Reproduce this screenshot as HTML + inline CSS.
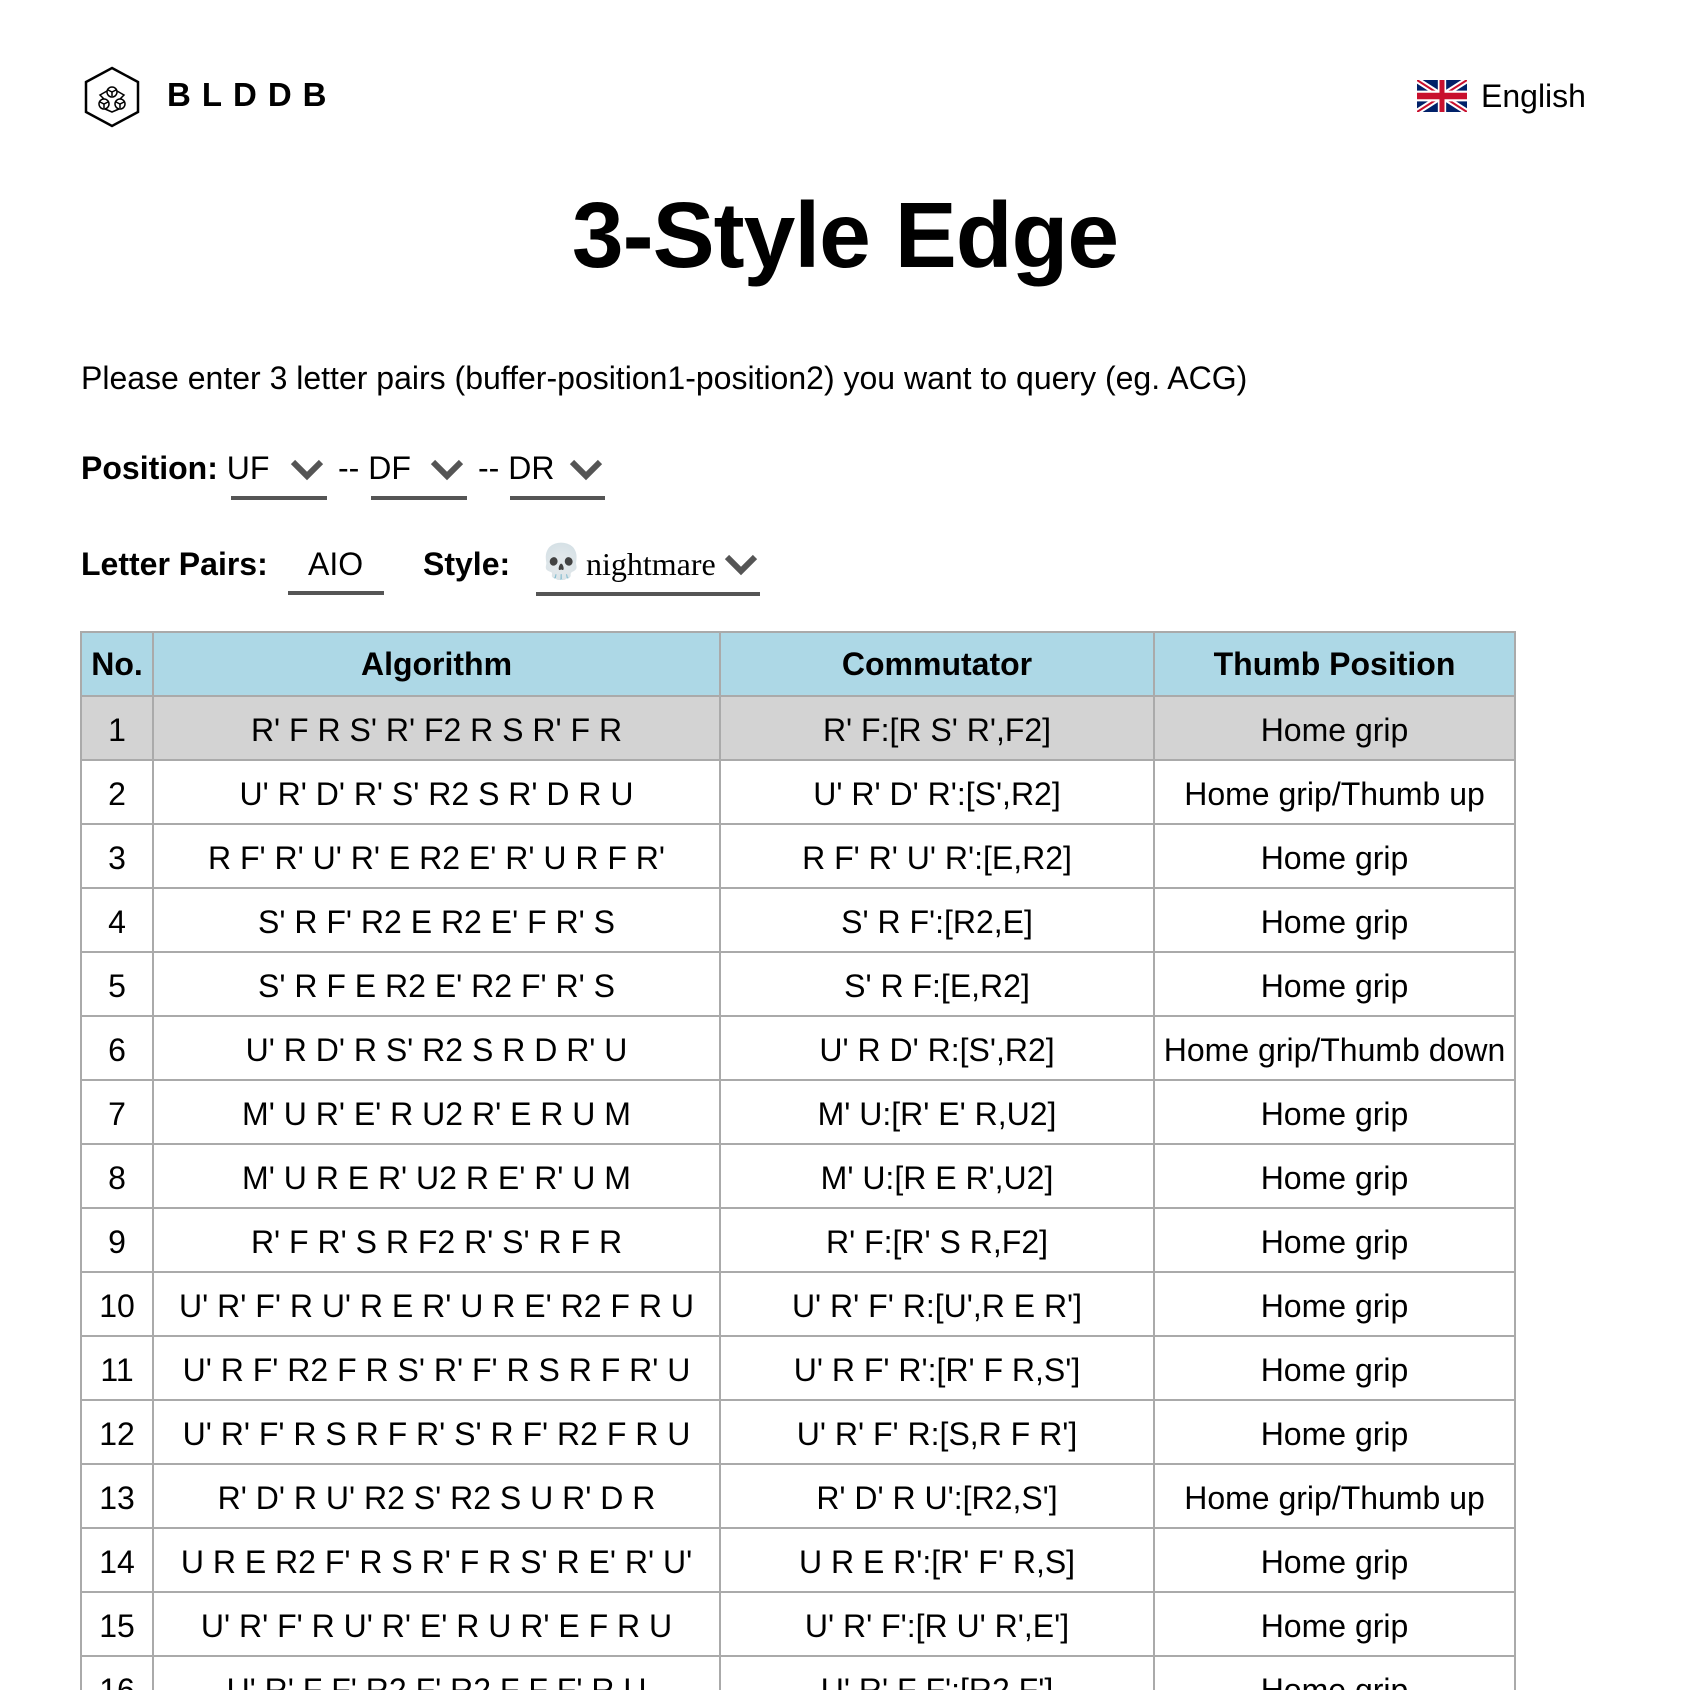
<!DOCTYPE html>
<html><head><meta charset="utf-8"><style>
html,body{margin:0;padding:0;width:1690px;height:1690px;overflow:hidden}
body{background:#fff;font-family:"Liberation Sans","DejaVu Sans",sans-serif;color:#000}
#w{position:relative;width:1690px;height:1690px;overflow:hidden}
.a{position:absolute;white-space:nowrap}
.logo{left:167px;top:76px;font-size:33px;font-weight:bold;letter-spacing:11px}
h1{position:absolute;left:0;width:1690px;text-align:center;top:182px;margin:0;font-size:93px;font-weight:bold;letter-spacing:-1px}
.f30{font-size:32px}
.b{font-weight:bold}
.ul{position:absolute;height:4px;background:#555}
.chev{position:absolute}
table{position:absolute;left:80px;top:631px;border-collapse:collapse;font-size:32px}
td,th{border:2px solid #aaa;height:62px;text-align:center;padding:0;white-space:nowrap}
td{padding-top:4px;height:58px}
th{background:#add8e6;font-weight:bold}
tr.sel td{background:#d3d3d3}
</style></head><body><div id="w">
<svg class="a" style="left:82px;top:65px" width="60" height="64" viewBox="0 0 60 64">
<polygon points="30,3 56,17 56,47 30,61 4,47 4,17" fill="none" stroke="#000" stroke-width="2.5"/>
<g fill="none" stroke="#000" stroke-width="1.5">
<circle cx="30" cy="27" r="5"/><circle cx="22" cy="39" r="5"/><circle cx="38" cy="39" r="5"/>
<path d="M30 27v4M26 25l4 2 4-2M22 39v4M18 37l4 2 4-2M38 39v4M34 37l4 2 4-2M22 34l-4-4 7-4M38 34l4-4-7-4M23 44l7 3 7-3"/>
</g></svg>
<div class="a logo">BLDDB</div>
<svg class="a" style="left:1417px;top:80px" width="50" height="32" viewBox="0 0 60 30" preserveAspectRatio="none">
<rect width="60" height="30" fill="#012169"/>
<path d="M0 0L60 30M60 0L0 30" stroke="#fff" stroke-width="6"/>
<path d="M0 0L60 30M60 0L0 30" stroke="#C8102E" stroke-width="2"/>
<path d="M30 0v30M0 15h60" stroke="#fff" stroke-width="10"/>
<path d="M30 0v30M0 15h60" stroke="#C8102E" stroke-width="6"/>
</svg>
<div class="a f30" style="left:1481px;top:78px">English</div>
<h1>3-Style Edge</h1>
<div class="a f30" style="left:81px;top:360px">Please enter 3 letter pairs (buffer-position1-position2) you want to query (eg. ACG)</div>
<div class="a f30" style="left:81px;top:450px"><span class="b">Position:</span> UF</div>
<div class="a f30" style="left:338px;top:450px">-- DF</div>
<div class="a f30" style="left:478px;top:450px">-- DR</div>
<svg class="chev" style="left:290px;top:459px" width="34" height="22"><path d="M3 3l14 14 14-14" fill="none" stroke="#555" stroke-width="6"/></svg>
<svg class="chev" style="left:430px;top:459px" width="34" height="22"><path d="M3 3l14 14 14-14" fill="none" stroke="#555" stroke-width="6"/></svg>
<svg class="chev" style="left:569px;top:459px" width="34" height="22"><path d="M3 3l14 14 14-14" fill="none" stroke="#555" stroke-width="6"/></svg>
<div class="ul" style="left:231px;top:496px;width:96px"></div>
<div class="ul" style="left:371px;top:496px;width:96px"></div>
<div class="ul" style="left:510px;top:496px;width:95px"></div>
<div class="a f30 b" style="left:81px;top:546px">Letter Pairs:</div>
<div class="a f30" style="left:308px;top:546px">AIO</div>
<div class="ul" style="left:288px;top:591px;width:96px"></div>
<div class="a f30 b" style="left:423px;top:546px">Style:</div>
<div class="a" style="left:540px;top:542px;font-size:34px">💀</div>
<div class="a" style="left:586px;top:546px;font-family:'Liberation Serif',serif;font-size:32px">nightmare</div>
<svg class="chev" style="left:724px;top:554px" width="34" height="22"><path d="M3 3l14 14 14-14" fill="none" stroke="#555" stroke-width="6"/></svg>
<div class="ul" style="left:536px;top:592px;width:224px"></div>
<table>
<tr><th style="width:70px">No.</th><th style="width:565px">Algorithm</th><th style="width:432px">Commutator</th><th style="width:359px">Thumb Position</th></tr>
<tr class="sel"><td>1</td><td>R' F R S' R' F2 R S R' F R</td><td>R' F:[R S' R',F2]</td><td>Home grip</td></tr>
<tr><td>2</td><td>U' R' D' R' S' R2 S R' D R U</td><td>U' R' D' R':[S',R2]</td><td>Home grip/Thumb up</td></tr>
<tr><td>3</td><td>R F' R' U' R' E R2 E' R' U R F R'</td><td>R F' R' U' R':[E,R2]</td><td>Home grip</td></tr>
<tr><td>4</td><td>S' R F' R2 E R2 E' F R' S</td><td>S' R F':[R2,E]</td><td>Home grip</td></tr>
<tr><td>5</td><td>S' R F E R2 E' R2 F' R' S</td><td>S' R F:[E,R2]</td><td>Home grip</td></tr>
<tr><td>6</td><td>U' R D' R S' R2 S R D R' U</td><td>U' R D' R:[S',R2]</td><td>Home grip/Thumb down</td></tr>
<tr><td>7</td><td>M' U R' E' R U2 R' E R U M</td><td>M' U:[R' E' R,U2]</td><td>Home grip</td></tr>
<tr><td>8</td><td>M' U R E R' U2 R E' R' U M</td><td>M' U:[R E R',U2]</td><td>Home grip</td></tr>
<tr><td>9</td><td>R' F R' S R F2 R' S' R F R</td><td>R' F:[R' S R,F2]</td><td>Home grip</td></tr>
<tr><td>10</td><td>U' R' F' R U' R E R' U R E' R2 F R U</td><td>U' R' F' R:[U',R E R']</td><td>Home grip</td></tr>
<tr><td>11</td><td>U' R F' R2 F R S' R' F' R S R F R' U</td><td>U' R F' R':[R' F R,S']</td><td>Home grip</td></tr>
<tr><td>12</td><td>U' R' F' R S R F R' S' R F' R2 F R U</td><td>U' R' F' R:[S,R F R']</td><td>Home grip</td></tr>
<tr><td>13</td><td>R' D' R U' R2 S' R2 S U R' D R</td><td>R' D' R U':[R2,S']</td><td>Home grip/Thumb up</td></tr>
<tr><td>14</td><td>U R E R2 F' R S R' F R S' R E' R' U'</td><td>U R E R':[R' F' R,S]</td><td>Home grip</td></tr>
<tr><td>15</td><td>U' R' F' R U' R' E' R U R' E F R U</td><td>U' R' F':[R U' R',E']</td><td>Home grip</td></tr>
<tr><td>16</td><td>U' R' F F' R2 F' R2 F F F' R U</td><td>U' R' F F':[R2,F']</td><td>Home grip</td></tr>
</table>
</div></body></html>
